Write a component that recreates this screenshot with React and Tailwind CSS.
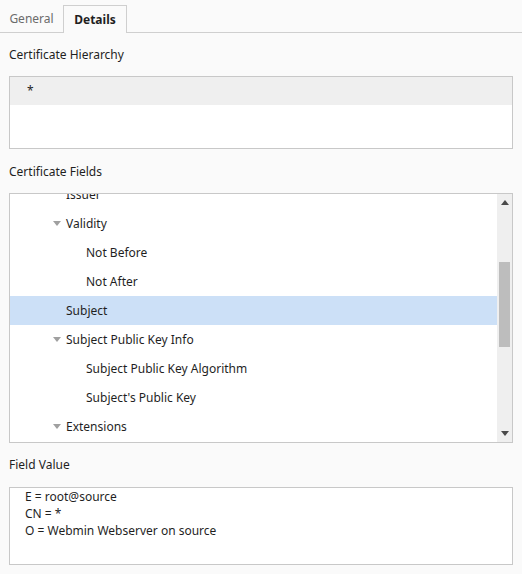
import React from "react";

const rows = [
  { label: "Issuer", level: 1 },
  { label: "Validity", level: 1, open: true },
  { label: "Not Before", level: 2 },
  { label: "Not After", level: 2 },
  { label: "Subject", level: 1, selected: true },
  { label: "Subject Public Key Info", level: 1, open: true },
  { label: "Subject Public Key Algorithm", level: 2 },
  { label: "Subject's Public Key", level: 2 },
  { label: "Extensions", level: 1, open: true },
  { label: "Certificate Basic Constraints", level: 2 },
];

function Caret() {
  return (
    <svg width="8" height="5" viewBox="0 0 8 5" className="mr-[5px]">
      <path d="M0 0 L8 0 L4 5 Z" fill="#a0a0a0" />
    </svg>
  );
}

function TreeRow({ row }) {
  const indent = row.level === 1 ? "pl-[43px]" : "pl-[76px]";
  return (
    <div
      className={`h-[29px] flex items-center ${indent} ${row.selected ? "bg-[#cce0f7]" : ""}`}
    >
      {row.open ? <Caret /> : row.level === 1 ? <span className="w-[13px]" /> : null}
      <span>{row.label}</span>
    </div>
  );
}

export default function App() {
  return (
    <div
      className="w-[522px] h-[574px] bg-[#fafafa] text-[12px] text-[#1f1f1f] overflow-hidden"
      style={{ fontFamily: '"Noto Sans", "Open Sans", sans-serif' }}
    >
      {/* tabs */}
      <div className="h-[33px] flex items-end border-b border-[#cfcfcf]">
        <div className="h-[27px] w-[63px] flex items-center justify-center text-[#6b6b6b]">General</div>
        <div className="h-[28px] w-[64px] -mb-px flex items-center justify-center font-bold border border-b-0 border-[#cfcfcf] bg-[#fafafa]">
          Details
        </div>
      </div>

      <div className="px-[9px]">
        <div className="h-[43px] flex items-center">Certificate Hierarchy</div>
        <div className="h-[73px] border border-[#c8c8c8] bg-white">
          <div className="h-[28px] bg-[#efefef] flex items-center pl-[17px]">*</div>
        </div>

        <div className="h-[44px] flex items-center pt-[1px]">Certificate Fields</div>
        <div className="h-[250px] border border-[#c8c8c8] bg-white flex overflow-hidden">
          <div className="flex-1 overflow-hidden">
            <div className="-mt-[14px]">
              {rows.map((r) => (
                <TreeRow key={r.label} row={r} />
              ))}
            </div>
          </div>
          <div className="w-[15px] bg-[#efefef] flex flex-col items-center">
            <svg width="8" height="5" viewBox="0 0 8 5" className="mt-[6px]">
              <path d="M0 5 L8 5 L4 0 Z" fill="#4a4a4a" />
            </svg>
            <div className="mt-[57px] w-[11px] h-[85px] bg-[#bdbdbd]" />
            <div className="flex-1" />
            <svg width="8" height="5" viewBox="0 0 8 5" className="mb-[6px]">
              <path d="M0 0 L8 0 L4 5 Z" fill="#4a4a4a" />
            </svg>
          </div>
        </div>

        <div className="h-[44px] flex items-center">Field Value</div>
        <div className="h-[78px] border border-[#c8c8c8] bg-white pl-[15px] leading-[17px]">
          <div>E = root@source</div>
          <div>CN = *</div>
          <div>O = Webmin Webserver on source</div>
        </div>
      </div>
    </div>
  );
}
